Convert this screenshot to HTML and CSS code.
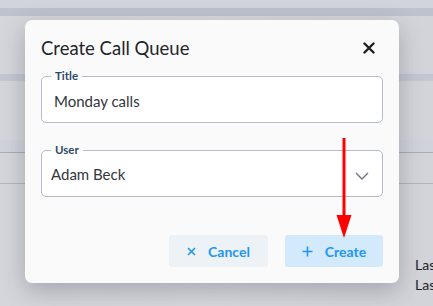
FILE: index.html
```html
<!DOCTYPE html>
<html lang="en">
<head>
    <meta charset="UTF-8">
    <meta name="viewport" content="width=device-width, initial-scale=1.0">
    <title>Create Call Queue</title>
    <link rel="stylesheet" href="styles.css">
</head>
<body>
    <div class="page">
        <div class="bar bar-top"></div>
        <div class="bar bar-dark"></div>
        <div class="gap gap-1"></div>
        <div class="bar bar-mid"></div>
        <div class="gap gap-2"></div>
        <div class="bar bar-light"></div>
        <div class="table-row"></div>
        <div class="last-list">
            <span>Last</span>
            <span>Last</span>
        </div>
    </div>

    <div class="dialog">
        <div class="dialog-head">
            <h2>Create Call Queue</h2>
            <button class="close-btn" aria-label="Close">
                <svg width="12" height="12" viewBox="0 0 12 12">
                    <path d="M1.5 1.5 L10.5 10.5 M10.5 1.5 L1.5 10.5" stroke="#1c1f26" stroke-width="2.4" stroke-linecap="round"/>
                </svg>
            </button>
        </div>

        <fieldset class="field field-title">
            <legend>Title</legend>
            <div class="field-value">Monday calls</div>
        </fieldset>

        <fieldset class="field field-select">
            <legend>User</legend>
            <div class="field-value">Adam Beck</div>
            <svg class="chevron" width="14" height="8" viewBox="0 0 14 8">
                <path d="M1 1 L7 7 L13 1" fill="none" stroke="#6d7480" stroke-width="1.4"/>
            </svg>
        </fieldset>

        <div class="actions">
            <button class="btn btn-cancel">
                <svg width="9" height="9" viewBox="0 0 9 9">
                    <path d="M1 1 L8 8 M8 1 L1 8" stroke="#2196f3" stroke-width="1.6"/>
                </svg>
                Cancel
            </button>
            <button class="btn btn-create">
                <svg width="11" height="11" viewBox="0 0 11 11">
                    <path d="M5.5 0.5 V10.5 M0.5 5.5 H10.5" stroke="#2196f3" stroke-width="1.6"/>
                </svg>
                Create
            </button>
        </div>
    </div>

    <!-- annotation arrow pointing at Create -->
    <svg class="arrow" width="20" height="102" viewBox="0 0 20 102">
        <path d="M10 0 V80" stroke="#ff0000" stroke-width="3"/>
        <path d="M2.5 77 L17.5 77 L10 100 Z" fill="#ff0000"/>
    </svg>
</body>
</html>
```

FILE: styles.css
```css
body {
    margin: 0;
    width: 433px;
    height: 306px;
    overflow: hidden;
    font-family: "Lato", "Open Sans", sans-serif;
    background: #d6d8dd;
}

/* Dimmed page behind the dialog */
.page {
    height: 306px;
    background: linear-gradient(90deg, #d4d6db, #d8d9de 50%, #d2d4d9);
}

.bar-top {
    height: 8px;
    background: #d1d4db;
}

.bar-dark {
    height: 8px;
    background: #bcc2ce;
}

.gap-1 {
    height: 58px;
}

.bar-mid {
    height: 7px;
    background: #c2c7d2;
}

.gap-2 {
    height: 59px;
}

.bar-light {
    height: 12px;
    background: #d0d3db;
}

.table-row {
    height: 30px;
    border-top: 1px solid #a9adb5;
    border-bottom: 1px solid #b3b6bd;
}

.last-list {
    display: flex;
    flex-direction: column;
    align-items: flex-start;
    gap: 3px;
    padding: 72px 0 0 415px;
    font-size: 14px;
    color: #202226;
}

/* Dialog */
.dialog {
    position: absolute;
    left: 25px;
    top: 20px;
    width: 342px;
    padding: 16px;
    background: #fafafa;
    border-radius: 7px;
    box-shadow: 0 8px 24px rgba(40, 44, 56, 0.28);
}

.dialog-head {
    display: flex;
    justify-content: space-between;
    align-items: center;
    height: 24px;
}

.dialog-head h2 {
    margin: 0;
    font-size: 18.5px;
    font-weight: 400;
    color: #22252b;
}

.close-btn {
    border: none;
    background: none;
    padding: 0;
    margin-right: 8px;
    display: flex;
}

/* Outlined fields */
.field {
    position: relative;
    margin: 10px 0 0 0;
    padding: 0 12px;
    border: 1px solid #b5bcc6;
    border-radius: 5px;
    background: #ffffff;
}

.field legend {
    padding: 0 4px;
    margin-left: -3px;
    font-size: 11.5px;
    font-weight: 700;
    color: #2e4a68;
    line-height: 12px;
}

.field-value {
    font-size: 15px;
    color: #33363c;
    line-height: 38px;
    padding-bottom: 2px;
}

.field-select {
    margin-top: 21px;
    padding: 0 9px;
}

.field-select legend {
    margin-left: 0;
}

.field-select .field-value {
    line-height: 36px;
    padding-bottom: 4px;
}

.chevron {
    position: absolute;
    right: 13px;
    top: 16px;
}

/* Buttons */
.actions {
    display: flex;
    justify-content: flex-end;
    gap: 17px;
    margin-top: 38px;
}

.btn {
    display: flex;
    align-items: center;
    justify-content: center;
    gap: 12px;
    width: 99px;
    height: 32px;
    border: none;
    border-radius: 3px;
    font-family: inherit;
    font-size: 14px;
    font-weight: 700;
    color: #2196f3;
}

.btn-cancel {
    background: #edf2f7;
}

.btn-create {
    width: 98px;
    background: #d3e9fc;
}

.arrow {
    position: absolute;
    left: 334px;
    top: 138px;
}
```
